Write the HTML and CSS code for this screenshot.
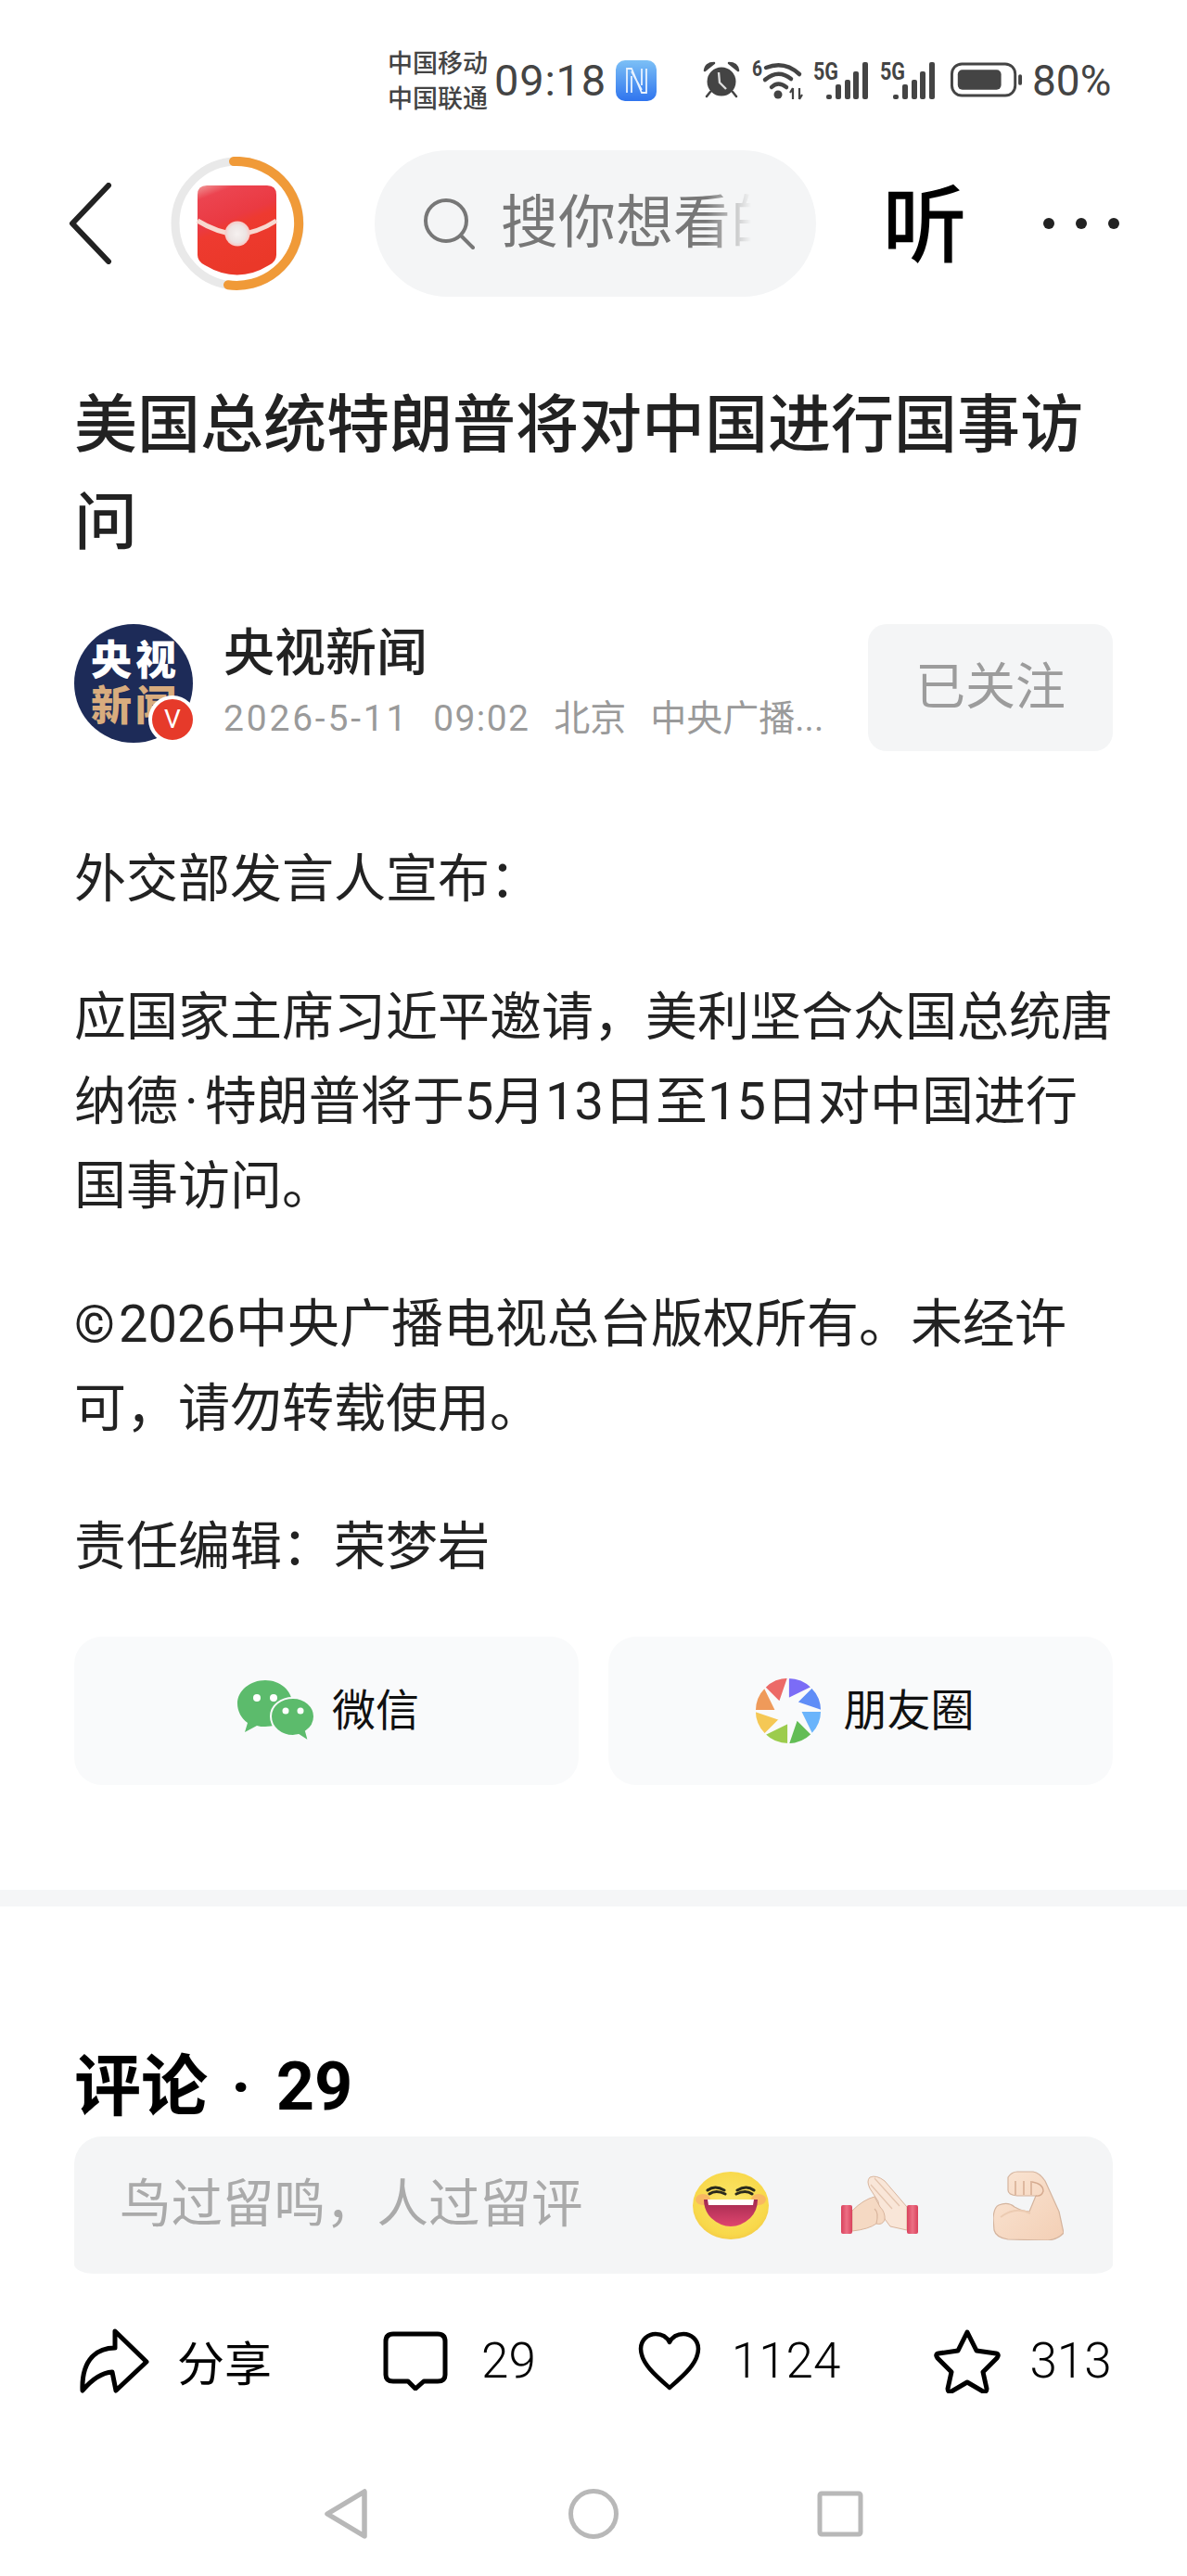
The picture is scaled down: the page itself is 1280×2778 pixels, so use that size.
FILE: index.html
```html
<!DOCTYPE html>
<html lang="zh-CN">
<head>
<meta charset="utf-8">
<title>美国总统特朗普将对中国进行国事访问</title>
<link rel="stylesheet" href="styles.css">
</head>
<body>
<div class="page">
  <div class="status">
    <div class="carrier"><span>中国移动</span><span>中国联通</span></div>
    <span class="time">09:18</span>
    <svg class="nfc" viewBox="0 0 44 44"><defs><linearGradient id="nf" x1="0" y1="0" x2="0" y2="1"><stop offset="0" stop-color="#7cc0f6"/><stop offset="1" stop-color="#2f74ee"/></linearGradient></defs><rect width="44" height="44" rx="10" fill="url(#nf)"/><path d="M12 35V9h5l11 26h5V9M17 35V17M28 27V9M17 12l11 20" fill="none" stroke="#e8f2ff" stroke-width="1.800"/></svg>
    <svg class="alarm" viewBox="0 0 40 40"><circle cx="20" cy="22" r="15.500" fill="#444"/><path d="M2 10Q3 2 12 2zM38 10Q37 2 28 2zM8 33l-4 5M32 33l4 5" fill="#444" stroke="#444" stroke-width="2.500" stroke-linecap="round" stroke-linejoin="round"/><path d="M17 12l1 11 7 7" fill="none" stroke="#ddd" stroke-width="2.400"/></svg>
    <svg class="wifi" viewBox="0 0 54 43"><text x="0" y="17" class="s6" textLength="11" lengthAdjust="spacingAndGlyphs">6</text><path d="M15 8Q35 0 51 15M14 21Q28 9 42 20M21 29Q28 22 37 29" fill="none" stroke="#444" stroke-width="4.500" stroke-linecap="round"/><circle cx="28" cy="37" r="4.500" fill="#444"/><path d="M44 30v12M51 30v12M44 30l-3 5M51 42l3-5" stroke="#444" stroke-width="2.200" fill="none"/></svg>
    <svg class="sig" viewBox="0 0 60 40"><text x="0" y="19" class="s5" textLength="27" lengthAdjust="spacingAndGlyphs">5G</text><path d="M14 37q0-2 2-2h2q2 0 2 2v1q0 2-2 2h-2q-2 0-2-2zM24 26q0-2 2-2h2q2 0 2 2v12q0 2-2 2h-2q-2 0-2-2zM34 21q0-2 2-2h2q2 0 2 2v17q0 2-2 2h-2q-2 0-2-2zM43 12q0-2 2-2h2q2 0 2 2v26q0 2-2 2h-2q-2 0-2-2zM53 2q0-2 2-2h2q2 0 2 2v36q0 2-2 2h-2q-2 0-2-2z" fill="#444"/></svg>
    <svg class="sig sig-second" viewBox="0 0 60 40"><text x="0" y="19" class="s5" textLength="27" lengthAdjust="spacingAndGlyphs">5G</text><path d="M14 37q0-2 2-2h2q2 0 2 2v1q0 2-2 2h-2q-2 0-2-2zM24 26q0-2 2-2h2q2 0 2 2v12q0 2-2 2h-2q-2 0-2-2zM34 21q0-2 2-2h2q2 0 2 2v17q0 2-2 2h-2q-2 0-2-2zM43 12q0-2 2-2h2q2 0 2 2v26q0 2-2 2h-2q-2 0-2-2zM53 2q0-2 2-2h2q2 0 2 2v36q0 2-2 2h-2q-2 0-2-2z" fill="#444"/></svg>
    <svg class="batt" viewBox="0 0 80 38"><rect x="1.500" y="1.500" width="70" height="35" rx="11" fill="none" stroke="#444" stroke-width="3"/><rect x="8" y="8" width="48" height="22" rx="5" fill="#444"/><rect x="75" y="13" width="4" height="12" rx="2" fill="#444"/></svg>
    <span class="pct">80%</span>
  </div>

  <div class="topbar">
    <svg class="back" viewBox="0 0 46 88"><path d="M43 3L4 44l39 41" fill="none" stroke="#222" stroke-width="6" stroke-linecap="round" stroke-linejoin="round"/></svg>
    <svg class="ring" viewBox="0 0 144 144">
      <defs><linearGradient id="rp" x1="0" y1="0" x2=".35" y2="1"><stop offset="0" stop-color="#f09a9a"/><stop offset=".15" stop-color="#ec4450"/><stop offset=".45" stop-color="#ea3a42"/><stop offset=".55" stop-color="#ee3a30"/><stop offset="1" stop-color="#ea3829"/></linearGradient><radialGradient id="bt"><stop offset="0" stop-color="#f6f1f0"/><stop offset=".7" stop-color="#ece4e3"/><stop offset="1" stop-color="#f8c8c4"/></radialGradient></defs>
      <circle cx="72" cy="72" r="67" fill="none" stroke="#e9e9e9" stroke-width="9"/>
      <path d="M68 5A67 67 0 1 1 62 138.300" fill="none" stroke="#f09a38" stroke-width="10" stroke-linecap="round"/>
      <path d="M29 41Q29 31 39 31H104Q114 31 114 41V106Q114 113 106 117Q72 138 37 117Q29 113 29 106Z" fill="url(#rp)"/>
      <path d="M29 69Q50 82 72 84Q94 82 114 69" fill="none" stroke="#f8d8d0" stroke-width="5"/>
      <circle cx="72" cy="83" r="13.500" fill="url(#bt)"/>
    </svg>
    <div class="search">
      <svg class="mag" viewBox="0 0 56 56"><circle cx="25" cy="25" r="22" fill="none" stroke="#777" stroke-width="4"/><path d="M41 41l13 13" stroke="#777" stroke-width="4" stroke-linecap="round"/></svg>
      <span class="search-text">搜你想看的</span>
    </div>
    <span class="listen">听</span>
    <div class="dots"><i></i><i></i><i></i></div>
  </div>

  <h1 class="title">美国总统特朗普将对中国进行国事访问</h1>

  <div class="author">
    <div class="avatar">
      <div class="avatar-text"><span>央</span><span>视</span><span class="tan">新</span><span class="tan">闻</span></div>
      <span class="vbadge">V</span>
    </div>
    <div class="author-info">
      <div class="author-name">央视新闻</div>
      <div class="author-meta"><span class="m-date">2026-5-11</span><span class="m-time">09:02</span><span>北京</span><span>中央广播...</span></div>
    </div>
    <div class="follow">已关注</div>
  </div>

  <div class="article">
    <p>外交部发言人宣布：</p>
    <p>应国家主席习近平邀请，美利坚合众国总统唐纳德<span class="middot">·</span>特朗普将于5月13日至15日对中国进行国事访问。</p>
    <p><span class="copy">©</span>2026中央广播电视总台版权所有。未经许可，请勿转载使用。</p>
    <p>责任编辑：荣梦岩</p>
  </div>

  <div class="share">
    <div class="share-btn">
      <svg class="wechat" viewBox="0 0 84 67"><path d="M30 0c16 0 29 11 29 25 0 14-13 25-29 25-4 0-6 0-9-1l-13 7 3-10C4 41 0 33 0 25 0 11 14 0 30 0z" fill="#5cbb6c"/><ellipse cx="21" cy="19" rx="4" ry="4" fill="#fff"/><ellipse cx="39" cy="19" rx="4" ry="4" fill="#fff"/><path d="M60 19c13 0 23 9 23 20 0 7-3 12-9 16l3 11-11-7c-2 0-4 1-6 1-13 0-24-9-24-21s11-20 24-20z" fill="#5cbb6c" stroke="#f9fafb" stroke-width="2"/><circle cx="52" cy="33" r="3.500" fill="#fff"/><circle cx="68" cy="33" r="3.500" fill="#fff"/></svg>
      <span class="share-text">微信</span>
    </div>
    <div class="share-btn share-moments">
      <svg class="moments" viewBox="-36 -36 72 72">
        <path d="M0-36A36 36 0 0 1 25.500-25.500L0-13z" fill="#7b6cf6" stroke="#f9fafb" stroke-width="1.800"/>
        <path transform="rotate(45)" d="M0-36A36 36 0 0 1 25.500-25.500L0-13z" fill="#5f8df7" stroke="#f9fafb" stroke-width="1.800"/>
        <path transform="rotate(90)" d="M0-36A36 36 0 0 1 25.500-25.500L0-13z" fill="#6ab4fb" stroke="#f9fafb" stroke-width="1.800"/>
        <path transform="rotate(135)" d="M0-36A36 36 0 0 1 25.500-25.500L0-13z" fill="#63bd55" stroke="#f9fafb" stroke-width="1.800"/>
        <path transform="rotate(180)" d="M0-36A36 36 0 0 1 25.500-25.500L0-13z" fill="#9ccc4d" stroke="#f9fafb" stroke-width="1.800"/>
        <path transform="rotate(225)" d="M0-36A36 36 0 0 1 25.500-25.500L0-13z" fill="#f5c855" stroke="#f9fafb" stroke-width="1.800"/>
        <path transform="rotate(270)" d="M0-36A36 36 0 0 1 25.500-25.500L0-13z" fill="#ef9a5a" stroke="#f9fafb" stroke-width="1.800"/>
        <path transform="rotate(315)" d="M0-36A36 36 0 0 1 25.500-25.500L0-13z" fill="#ec6a68" stroke="#f9fafb" stroke-width="1.800"/>
      </svg>
      <span class="share-text">朋友圈</span>
    </div>
  </div>

  <div class="divider"></div>

  <div class="comments">
    <h2 class="comments-title">评论<span class="sep">·</span>29</h2>
    <div class="comment-input">
      <span class="placeholder">鸟过留鸣，人过留评</span>
      <div class="emojis">
        <svg class="emoji-face" viewBox="0 0 82 73">
          <defs><radialGradient id="fc" cx=".5" cy=".45" r=".6"><stop offset="0" stop-color="#fbe76a"/><stop offset=".8" stop-color="#f8d84a"/><stop offset="1" stop-color="#f2c646"/></radialGradient><linearGradient id="mo" x1="0" y1="0" x2="0" y2="1"><stop offset="0" stop-color="#a22a50"/><stop offset="1" stop-color="#e0456e"/></linearGradient></defs>
          <ellipse cx="41" cy="36.500" rx="41" ry="36.500" fill="url(#fc)"/>
          <ellipse cx="11" cy="30" rx="8" ry="6" fill="#f9a86a" opacity=".7"/><ellipse cx="71" cy="30" rx="8" ry="6" fill="#f9a86a" opacity=".7"/>
          <path d="M16 20Q24 14 34 20M18 24Q25 19 35 24M66 20Q58 14 48 20M64 24Q57 19 47 24" fill="none" stroke="#2a2a1c" stroke-width="3" stroke-linecap="round"/>
          <path d="M12 30H70Q70 42 62 50 52 59 41 59 30 59 20 50 12 42 12 30z" fill="url(#mo)"/>
          <path d="M16 30H66L65 36H17z" fill="#fff"/>
        </svg>
        <svg class="emoji-clap" viewBox="0 0 83 64">
          <defs><linearGradient id="cf" x1="0" y1="0" x2="1" y2="0"><stop offset="0" stop-color="#d9415c"/><stop offset=".5" stop-color="#ec7085"/><stop offset="1" stop-color="#d9415c"/></linearGradient></defs>
          <path d="M71 34L47 6Q38-1 31 2 27 6 31 14L40 28 42 40 53 55 71 59z" fill="#f9e6d8" stroke="#d9b59d" stroke-width="1"/>
          <path d="M36 3L63 33M32 10L55 36" fill="none" stroke="#e3c4ae" stroke-width="1.200"/>
          <path d="M12 38Q24 26 36 23L42 34Q48 40 47 48 44 54 38 52 30 58 12 60z" fill="#f5d9c3" stroke="#d9b59d" stroke-width="1"/>
          <path d="M36 36Q41 40 38 52" fill="none" stroke="#d9b59d" stroke-width="1.200"/>
          <rect x="0" y="32" width="12" height="31" rx="2" fill="url(#cf)"/><rect x="71" y="32" width="12" height="31" rx="2" fill="url(#cf)"/>
        </svg>
        <svg class="emoji-arm" viewBox="0 0 76 75">
          <defs><linearGradient id="sk" x1="0" y1="0" x2="1" y2="1"><stop offset="0" stop-color="#fae5d4"/><stop offset="1" stop-color="#f3cfb5"/></linearGradient></defs>
          <path d="M16 7Q20 1 26 1H43Q50 2 56 11L71 44 76 67Q70 74 59 75L16 74Q3 72 1 64L0 51Q1 39 6 37 16 33 23 39 32 44 39 44L46 27 26 27Q16 26 16 21z" fill="url(#sk)" stroke="#d4b49e" stroke-width="1.200" stroke-linejoin="round"/>
          <path d="M24 11V26M33 11V26M41 11V26M42 12Q54 14 54 22 52 28 46 27" fill="none" stroke="#d4a98e" stroke-width="1.400"/>
          <path d="M8 50Q24 38 40 46" fill="none" stroke="#eccbb2" stroke-width="2"/>
        </svg>
      </div>
    </div>
  </div>

  <div class="actions">
    <div class="action action-share">
      <svg class="ic-share" viewBox="0 0 76 70"><path d="M39 3L73 36 40 67 36 47Q20 48 4 67 3 42 15 30 24 21 39 21z" fill="none" stroke="#000" stroke-width="5" stroke-linejoin="round"/></svg>
      <span class="share-label">分享</span>
    </div>
    <div class="action action-comment">
      <svg class="ic-comment" viewBox="0 0 70 64"><path d="M11 3h48q8 0 8 8v36q0 7-8 7H44l-9 8-8-8H11q-8 0-8-7V11q0-8 8-8z" fill="none" stroke="#000" stroke-width="5" stroke-linejoin="round"/></svg>
      <span>29</span>
    </div>
    <div class="action action-heart">
      <svg class="ic-heart" viewBox="0 0 68 64"><path d="M34 61C18 47 3 34 3 19 3 9 11 3 19 3c7 0 12 3 15 9 3-6 8-9 15-9 8 0 16 6 16 16 0 15-15 28-31 42z" fill="none" stroke="#000" stroke-width="4.500" stroke-linejoin="round"/></svg>
      <span>1124</span>
    </div>
    <div class="action action-star">
      <svg class="ic-star" viewBox="0 0 72 69"><path d="M36 3l10 20 21 3q4 1 1 5L53 46l4 18q0 4-4 3L36 57 19 67q-4 1-4-3l4-18L4 31q-3-4 1-5l21-3z" fill="none" stroke="#000" stroke-width="5" stroke-linejoin="round"/></svg>
      <span>313</span>
    </div>
  </div>

  <div class="nav">
    <svg class="nav-back" viewBox="0 0 48 56"><path d="M44 4v48L4 28z" fill="none" stroke="#b8b8b8" stroke-width="5.500" stroke-linejoin="round"/></svg>
    <svg class="nav-home" viewBox="0 0 54 54"><circle cx="27" cy="27" r="24.500" fill="none" stroke="#b8b8b8" stroke-width="5"/></svg>
    <svg class="nav-recent" viewBox="0 0 50 50"><rect x="3" y="3" width="44" height="44" rx="2" fill="none" stroke="#b8b8b8" stroke-width="5"/></svg>
  </div>
</div>
</body>
</html>
```

FILE: styles.css
```css
* { box-sizing: border-box; }
html, body { margin: 0; padding: 0; background: #fff; }
.page {
  width: 1280px;
  height: 2778px;
  overflow: hidden;
  font-family: Roboto, "Noto Sans CJK SC", sans-serif;
  color: #222;
}

/* status bar */
.status { height: 150px; padding: 50px 0 0 418px; display: flex; align-items: flex-start; color: #444; }
.status svg { overflow: visible; }
.carrier { display: flex; flex-direction: column; font-size: 27px; line-height: 38px; font-weight: 500; width: 115px; }
.time { font-size: 47px; line-height: 74px; width: 131px; font-weight: 400; letter-spacing: 0.8px; }
.nfc { width: 44px; height: 44px; margin-top: 15px; }
.alarm { width: 40px; height: 40px; margin: 16px 0 0 50px; }
.wifi { width: 54px; height: 43px; margin: 15px 0 0 13px; }
.sig { width: 60px; height: 40px; margin: 17px 0 0 12px; }
.sig-second { margin-left: 12px; }
.batt { width: 78px; height: 38px; margin: 17px 0 0 16px; }
.pct { font-size: 46px; line-height: 74px; margin-left: 10px; font-weight: 400; }
.s6, .s5 { font-family: Roboto, sans-serif; font-weight: 700; fill: #444; }
.s6 { font-size: 23px; }
.s5 { font-size: 26px; }

/* top bar */
.topbar { height: 182px; display: flex; align-items: center; padding-left: 73px; }
.back { width: 48px; height: 88px; }
.ring { width: 144px; height: 144px; margin-left: 63px; }
.search { width: 476px; height: 158px; margin-left: 76px; border-radius: 79px; background: #f4f5f6; display: flex; align-items: center; padding-left: 52px; }
.mag { width: 56px; height: 56px; }
.search-text {
  width: 270px; margin-left: 28px; font-size: 62px; line-height: 80px; color: #777; white-space: nowrap; overflow: hidden;
  -webkit-mask-image: linear-gradient(to right, #000 82%, transparent 100%);
  mask-image: linear-gradient(to right, #000 82%, transparent 100%);
}
.listen { font-size: 90px; line-height: 100px; margin: 8px 0 0 72px; color: #000; font-weight: 400; -webkit-text-stroke: 1.500px #000; }
.dots { display: flex; gap: 23px; margin-left: 83px; }
.dots i { width: 12px; height: 12px; border-radius: 50%; background: #222; display: block; }

/* title */
.title { margin: 75px 0 0 80px; width: 1100px; font-size: 68px; line-height: 105px; font-weight: 500; color: #222; }

/* author */
.author { margin: 56px 80px 0; height: 137px; display: flex; align-items: flex-start; }
.avatar { position: relative; width: 128px; height: 128px; border-radius: 50%; background: #1d2b58; flex: none; }
.avatar-text { display: grid; grid-template-columns: 48px 48px; justify-content: center; padding-top: 16px; font-size: 44px; line-height: 49px; font-weight: 900; color: #fff; text-align: center; }
.tan { color: #d8ac7e; }
.vbadge { position: absolute; right: -4px; bottom: -1px; width: 52px; height: 52px; border-radius: 50%; background: #e63a2a; border: 4px solid #fff; color: #fff; font-size: 28px; line-height: 44px; font-weight: 400; text-align: center; }
.author-info { margin-left: 33px; width: 695px; }
.author-name { font-size: 55px; line-height: 64px; font-weight: 500; color: #222; margin-top: -1px; }
.author-meta { display: flex; gap: 26px; margin-top: 14px; font-size: 39px; line-height: 50px; color: #9a9a9a; white-space: nowrap; }
.m-date { letter-spacing: 2.800px; }
.m-time { letter-spacing: 1.400px; }
.follow { width: 264px; height: 137px; border-radius: 20px; background: #f4f5f6; color: #9c9c9c; font-size: 54px; line-height: 137px; text-align: center; }

/* article */
.article { margin: 93px 80px 0; width: 1122px; font-size: 56px; line-height: 91px; color: #222; }
.article p { margin: 0 0 58px; }
.article p:last-child { margin-bottom: 0; }
.middot { margin: 0 7px; }
.copy { margin-right: 4px; }

/* share */
.share { margin: 51px 80px 0; display: grid; grid-template-columns: 544px 544px; gap: 32px; }
.share-btn { height: 160px; border-radius: 30px; background: #f9fafb; display: flex; align-items: center; justify-content: center; gap: 18px; font-size: 47px; color: #111; }
.share-moments { gap: 24px; padding-left: 8px; }
.share-text { margin-bottom: 10px; }
.wechat { width: 84px; height: 67px; margin-left: 4px; }
.moments { width: 72px; height: 72px; }
.divider { height: 18px; margin-top: 113px; background: #f5f6f7; }

/* comments */
.comments { padding: 0 80px; }
.comments-title { margin: 151px 0 0; font-size: 72px; line-height: 88px; font-weight: 700; color: #000; }
.sep { margin: 0 27px 0 25px; }
.comment-input { margin-top: 9px; height: 148px; border-radius: 30px 30px 22px 22px / 30px 30px 10px 10px; background: #f4f5f6; display: flex; align-items: center; padding: 0 53px 0 49px; }
.placeholder { flex: 1; font-size: 55.500px; color: #aaa; line-height: 60px; }
.emojis { display: flex; align-items: center; }
.emoji-face { width: 82px; height: 73px; }
.emoji-clap { width: 83px; height: 64px; margin-left: 78px; }
.emoji-arm { width: 76px; height: 75px; margin-left: 81px; }

/* actions */
.actions { margin-top: 54px; height: 80px; display: flex; align-items: center; font-size: 53px; color: #000; font-weight: 300; }
.action { display: flex; align-items: center; }
.action-share { margin-left: 85px; }
.ic-share { width: 76px; height: 70px; }
.share-label { font-size: 51px; margin-left: 30px; font-weight: 400; }
.action-comment { margin-left: 120px; }
.ic-comment { width: 70px; height: 64px; }
.action-comment span { margin-left: 36px; }
.action-heart { margin-left: 110px; }
.ic-heart { width: 68px; height: 64px; }
.action-heart span { margin-left: 33px; }
.action-star { margin-left: 101px; }
.ic-star { width: 72px; height: 69px; }
.action-star span { margin-left: 31px; }

/* navigation */
.nav { margin-top: 97px; display: flex; align-items: center; padding-left: 349px; }
.nav-back { width: 48px; height: 56px; }
.nav-home { width: 54px; height: 54px; margin-left: 216px; }
.nav-recent { width: 50px; height: 50px; margin-left: 214px; }
```
